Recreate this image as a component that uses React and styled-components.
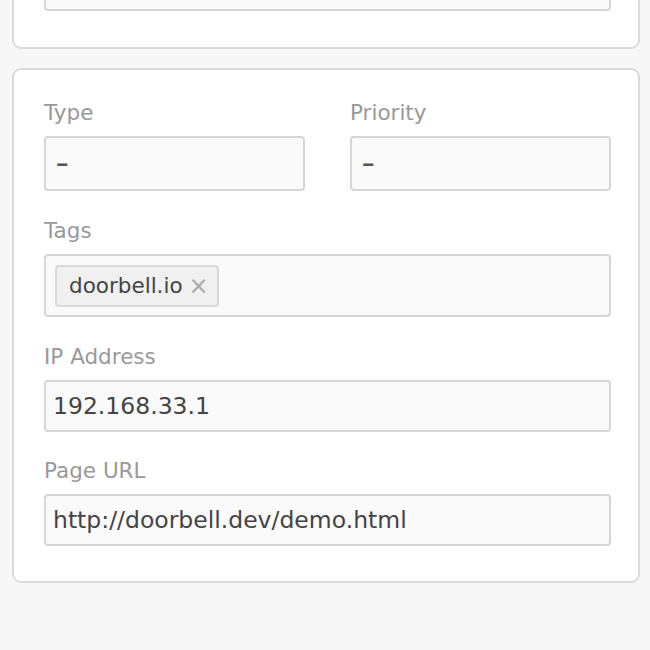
import React from "react";
import styled, { createGlobalStyle } from "styled-components";

const GlobalStyle = createGlobalStyle`
  html, body {
    margin: 0;
    padding: 0;
    background: #f7f7f7;
  }
  body {
    font-family: "DejaVu Sans", "Open Sans", sans-serif;
  }
`;

const Page = styled.div`
  width: 650px;
  height: 650px;
  overflow: hidden;
  padding: 0 10px 0 12px;
  box-sizing: border-box;
  display: flex;
  flex-direction: column;
  gap: 19px;
`;

const Card = styled.div`
  background: #fff;
  border: 2px solid #dadada;
  border-radius: 9px;
  box-sizing: border-box;
  padding: ${(p) => p.$pad};
  margin-top: ${(p) => p.$top || "0"};
  display: flex;
  flex-direction: column;
`;

const Row = styled.div`
  display: grid;
  grid-template-columns: 1fr 1fr;
  column-gap: 45px;
`;

const Field = styled.div`
  display: flex;
  flex-direction: column;
  margin-bottom: ${(p) => p.$mb || "0"};
`;

const Label = styled.label`
  color: #999;
  font-size: 21.5px;
  line-height: 26px;
  margin-bottom: 10px;
`;

const Box = styled.div`
  box-sizing: border-box;
  height: ${(p) => p.$h};
  background: #fafafa;
  border: 2px solid #d6d6d6;
  border-radius: 4px;
  display: flex;
  align-items: center;
  padding: 0 ${(p) => p.$px || "7px"};
  color: #444;
  font-size: 23.5px;
`;

const Dash = styled.span`
  color: #555;
  font-size: 25px;
  transform: scaleY(1.4);
`;

const Chip = styled.span`
  display: inline-flex;
  align-items: center;
  gap: 6px;
  height: 42px;
  box-sizing: border-box;
  padding: 0 8px 0 12px;
  background: #f0f0f0;
  border: 2px solid #dadada;
  border-radius: 4px;
  color: #444;
  font-size: 21.5px;
`;

const Remove = styled.span`
  color: #aaa;
  font-size: 24px;
  line-height: 1;
`;

export default function App() {
  return (
    <>
      <GlobalStyle />
      <Page>
        <Card $pad="0 27px 36px 30px" $top="-64px">
          <Box $h="73px" />
        </Card>
        <Card $pad="30px 27px 35px 30px">
          <Row>
            <Field $mb="27px">
              <Label>Type</Label>
              <Box $h="55px" $px="10px">
                <Dash>–</Dash>
              </Box>
            </Field>
            <Field $mb="27px">
              <Label>Priority</Label>
              <Box $h="55px" $px="10px">
                <Dash>–</Dash>
              </Box>
            </Field>
          </Row>
          <Field $mb="27px">
            <Label>Tags</Label>
            <Box $h="63px" $px="9px">
              <Chip>
                doorbell.io
                <Remove>×</Remove>
              </Chip>
            </Box>
          </Field>
          <Field $mb="26px">
            <Label>IP Address</Label>
            <Box $h="52px">192.168.33.1</Box>
          </Field>
          <Field>
            <Label>Page URL</Label>
            <Box $h="52px">http://doorbell.dev/demo.html</Box>
          </Field>
        </Card>
      </Page>
    </>
  );
}
